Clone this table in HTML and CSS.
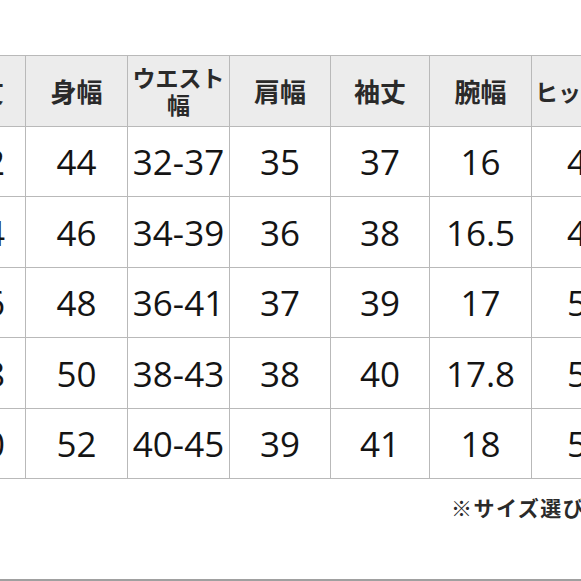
FILE: index.html
```html
<!DOCTYPE html>
<html lang="ja">
<head>
<meta charset="utf-8">
<link rel="stylesheet" href="styles.css">
</head>
<body>
<div class="page">
  <div class="chart">
    <div class="cell head first">着丈</div>
    <div class="cell head">身幅</div>
    <div class="cell head small">ウエスト<br>幅</div>
    <div class="cell head">肩幅</div>
    <div class="cell head">袖丈</div>
    <div class="cell head">腕幅</div>
    <div class="cell head hip">ヒップ幅</div>

    <div class="cell first">62</div><div class="cell">44</div><div class="cell">32-37</div><div class="cell">35</div><div class="cell">37</div><div class="cell">16</div><div class="cell">47</div>
    <div class="cell first">64</div><div class="cell">46</div><div class="cell">34-39</div><div class="cell">36</div><div class="cell">38</div><div class="cell">16.5</div><div class="cell">49</div>
    <div class="cell first">66</div><div class="cell">48</div><div class="cell">36-41</div><div class="cell">37</div><div class="cell">39</div><div class="cell">17</div><div class="cell">51</div>
    <div class="cell first">68</div><div class="cell">50</div><div class="cell">38-43</div><div class="cell">38</div><div class="cell">40</div><div class="cell">17.8</div><div class="cell">53</div>
    <div class="cell first">70</div><div class="cell">52</div><div class="cell">40-45</div><div class="cell">39</div><div class="cell">41</div><div class="cell">18</div><div class="cell">55</div>
  </div>
  <p class="note">※サイズ選びの際は実寸をご確認ください</p>
  <div class="rule"></div>
</div>
</body>
</html>
```
FILE: styles.css
```css
html, body {
  margin: 0;
  padding: 0;
  background: #ffffff;
}
body {
  width: 581px;
  height: 581px;
  overflow: hidden;
}
.page {
  position: relative;
  width: 581px;
  height: 581px;
  overflow: hidden;
  display: flex;
  flex-direction: column;
}
.chart {
  margin-top: 55px;
  margin-left: -55px;
  width: 700px;
  display: grid;
  grid-template-columns: 80px 101px 101px 100px 98px 101px 110px;
  grid-template-rows: 70px 69px 70px 69px 70px 69px;
  gap: 1px;
  padding: 1px 0;
  background: #b9b9b9;
}
.cell {
  background: #ffffff;
  display: flex;
  align-items: center;
  justify-content: center;
  font-family: "Open Sans", "Noto Sans", sans-serif;
  font-size: 35px;
  color: #141414;
  white-space: nowrap;
  overflow: visible;
}
.cell.first {
  justify-content: flex-end;
  padding-right: 20px;
}
.head {
  background: #ececec;
  font-family: "Noto Sans CJK JP", sans-serif;
  font-weight: 700;
  font-size: 26px;
  color: #2a2a2a;
  line-height: 1.17;
  text-align: center;
}
.head.first {
  padding-right: 21px;
}
.head.small {
  font-size: 23px;
}
.head.hip {
  font-size: 23px;
  justify-content: flex-start;
  padding-left: 3px;
}
.note {
  margin: 14px 0 0 451px;
  font-family: "Noto Sans CJK JP", sans-serif;
  font-weight: 700;
  font-size: 21px;
  letter-spacing: 1.5px;
  color: #2a2a2a;
  white-space: nowrap;
  line-height: 28px;
}
.rule {
  margin-top: auto;
  margin-bottom: 0;
  height: 2px;
  background: #a0a0a0;
}
```
